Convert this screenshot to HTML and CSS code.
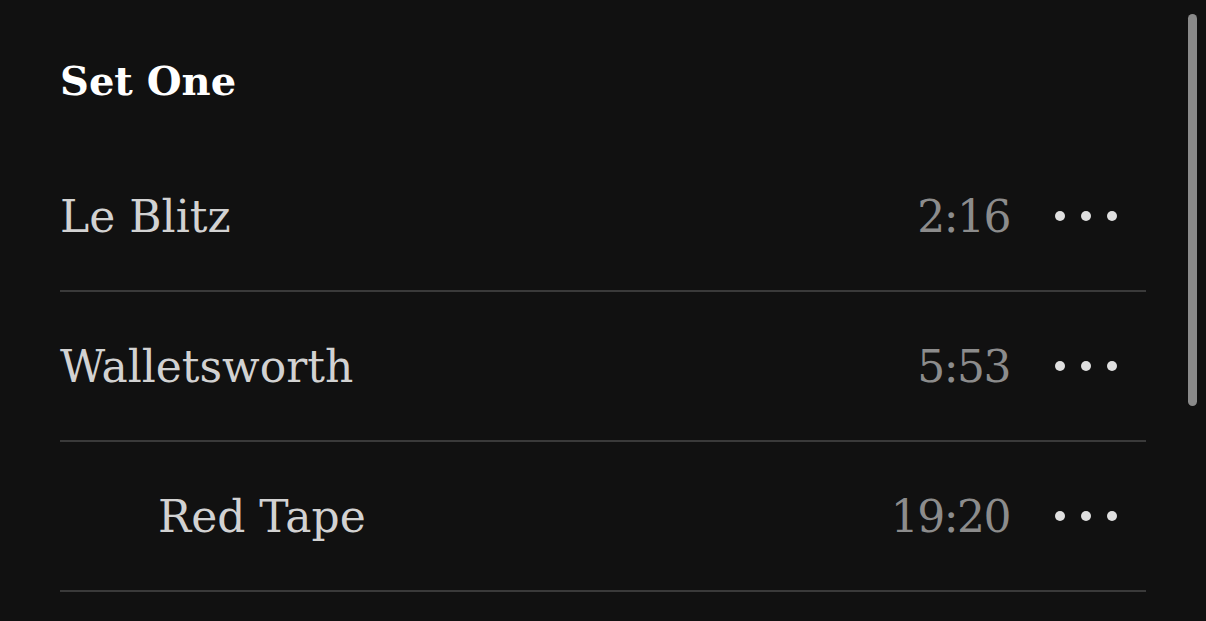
FILE: index.html
```html
<!DOCTYPE html>
<html>
<head>
<meta charset="utf-8">
<link rel="stylesheet" href="styles.css">
</head>
<body>
<div class="page">
  <h2 class="set-title">Set One</h2>
  <ul class="tracks">
    <li class="track">
      <span class="name">Le Blitz</span>
      <span class="time">2:16</span>
      <svg class="more" width="62" height="10" viewBox="0 0 62 10"><circle cx="5" cy="5" r="5"/><circle cx="31" cy="5" r="5"/><circle cx="57" cy="5" r="5"/></svg>
    </li>
    <li class="track">
      <span class="name">Walletsworth</span>
      <span class="time">5:53</span>
      <svg class="more" width="62" height="10" viewBox="0 0 62 10"><circle cx="5" cy="5" r="5"/><circle cx="31" cy="5" r="5"/><circle cx="57" cy="5" r="5"/></svg>
    </li>
    <li class="track track-sub">
      <span class="name">Red Tape</span>
      <span class="time">19:20</span>
      <svg class="more" width="62" height="10" viewBox="0 0 62 10"><circle cx="5" cy="5" r="5"/><circle cx="31" cy="5" r="5"/><circle cx="57" cy="5" r="5"/></svg>
    </li>
  </ul>
</div>
<div class="scrollbar"></div>
</body>
</html>
```
FILE: styles.css
```css
html, body {
  margin: 0;
  padding: 0;
  background: #111111;
  height: 100%;
  overflow: hidden;
}
.page {
  padding: 0 60px;
  font-family: "DejaVu Serif", serif;
}
.set-title {
  margin: 0;
  height: 142px;
  padding-top: 20px;
  box-sizing: border-box;
  display: flex;
  align-items: center;
  color: #ffffff;
  font-size: 40px;
  font-weight: bold;
  line-height: 1;
}
.tracks {
  list-style: none;
  margin: 0;
  padding: 0;
}
.track {
  height: 148px;
  border-bottom: 2px solid #3a3a3a;
  display: flex;
  align-items: center;
}
.name {
  flex: 1;
  color: #d2d2d2;
  font-size: 44px;
}
.track-sub .name {
  padding-left: 98px;
}
.time {
  color: #8c8c8c;
  font-size: 44px;
  letter-spacing: -1.5px;
}
.more {
  fill: #e0e0e0;
  margin-left: 45px;
  margin-right: 29px;
}
.scrollbar {
  position: absolute;
  left: 1188px;
  top: 14px;
  width: 9px;
  height: 392px;
  border-radius: 5px;
  background: #8a8a8a;
}
```
